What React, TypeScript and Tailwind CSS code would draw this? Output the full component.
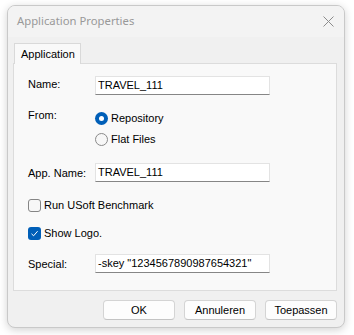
import React from "react";

const ui = { fontFamily: '"Liberation Sans", Arial, sans-serif' };
const title = { fontFamily: '"Segoe UI", "Noto Sans", "Open Sans", sans-serif' };

function TextBox({ value }: { value: string }) {
  return (
    <div className="w-[175px] h-[19px] bg-white border border-[#e3e3e3] border-b-[#868686] flex items-center pl-[2px] text-[11px] leading-[13px] text-black whitespace-nowrap overflow-hidden">
      {value}
    </div>
  );
}

function Radio({ checked, label }: { checked?: boolean; label: string }) {
  return (
    <div className="h-[21px] flex items-center">
      {checked ? (
        <div className="w-[13px] h-[13px] rounded-full bg-[#005fb8] flex items-center justify-center">
          <div className="w-[5px] h-[5px] rounded-full bg-white" />
        </div>
      ) : (
        <div className="w-[13px] h-[13px] rounded-full border border-[#8a8a8a] bg-[#f7f7f7]" />
      )}
      <span className="ml-[3px] text-[11px] leading-[13px]">{label}</span>
    </div>
  );
}

function Check({ checked, label }: { checked?: boolean; label: string }) {
  return (
    <div className="h-[13px] flex items-center">
      {checked ? (
        <div className="w-[13px] h-[13px] rounded-[3px] bg-[#005fb8] flex items-center justify-center">
          <svg width="9" height="9" viewBox="0 0 9 9">
            <path d="M1.5 4.8 L3.6 6.8 L7.6 2.2" fill="none" stroke="white" strokeWidth="1" />
          </svg>
        </div>
      ) : (
        <div className="w-[13px] h-[13px] rounded-[3px] border border-[#858585] bg-[#f7f7f7]" />
      )}
      <span className="ml-[3px] text-[11px] leading-[13px]">{label}</span>
    </div>
  );
}

function Btn({ label }: { label: string }) {
  return (
    <div className="w-[72px] h-[20px] rounded-[4px] bg-[#fdfdfd] border border-[#d4d4d4] border-b-[#c4c4c4] flex items-center justify-center text-[11px] leading-[13px] text-black">
      {label}
    </div>
  );
}

export default function App() {
  return (
    <div className="w-[354px] h-[335px] bg-white overflow-hidden pt-[5px] pl-[7px]" style={ui}>
      <div className="w-[338px] h-[323px] rounded-[8px] bg-[#f0f0f0] border border-[#c9c9c9] shadow-[0_2px_8px_rgba(0,0,0,0.18)] flex flex-col overflow-hidden text-black">
        <div className="h-[31px] bg-[#f3f3f3] flex items-center justify-between pl-[9px] pr-[9px]">
          <span className="text-[11.3px] text-[#999999]" style={title}>
            Application Properties
          </span>
          <svg width="11" height="11" viewBox="0 0 11 11" className="mr-[1px]">
            <path d="M0.5 0.5 L10.5 10.5 M10.5 0.5 L0.5 10.5" stroke="#8c8c8c" strokeWidth="1" />
          </svg>
        </div>
        <div className="flex flex-col pl-[5px] pr-[7px] pt-[6px]">
          <div className="flex">
            <div className="ml-[1px] w-[67px] h-[21px] bg-[#f9f9f9] border border-b-0 border-[#d9d9d9] flex items-center pl-[6px] text-[11px] leading-[13px] relative z-10 -mb-[1px]">
              Application
            </div>
          </div>
          <div className="h-[228px] bg-[#f9f9f9] border border-[#dcdcdc] pl-[14px] flex flex-col">
            <div className="mt-[12px] flex items-center h-[19px]">
              <div className="w-[67px] text-[11px] leading-[13px] -mt-[2px]">Name:</div>
              <TextBox value="TRAVEL_111" />
            </div>
            <div className="mt-[13px] flex">
              <div className="w-[67px] text-[11px] leading-[13px] pt-[1px]">From:</div>
              <div className="flex flex-col">
                <Radio checked label="Repository" />
                <Radio label="Flat Files" />
              </div>
            </div>
            <div className="mt-[13px] flex items-center h-[19px]">
              <div className="w-[67px] text-[11px] leading-[13px] mt-[1px]">App. Name:</div>
              <TextBox value="TRAVEL_111" />
            </div>
            <div className="mt-[17px]">
              <Check label="Run USoft Benchmark" />
            </div>
            <div className="mt-[15px]">
              <Check checked label="Show Logo." />
            </div>
            <div className="mt-[14px] flex items-center h-[19px]">
              <div className="w-[67px] text-[11px] leading-[13px] mt-[1px]">Special:</div>
              <TextBox value={'-skey "1234567890987654321"'} />
            </div>
          </div>
          <div className="mt-[9px] flex justify-end gap-[9px]">
            <Btn label="OK" />
            <Btn label="Annuleren" />
            <Btn label="Toepassen" />
          </div>
        </div>
      </div>
    </div>
  );
}
